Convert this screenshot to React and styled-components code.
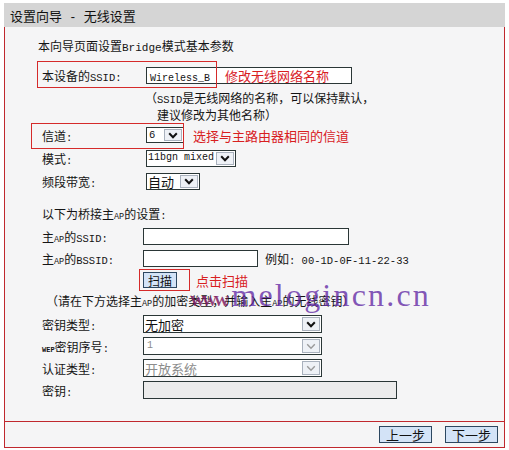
import React from 'react';
import styled, { createGlobalStyle } from 'styled-components';

const Global = createGlobalStyle`
  html, body { margin: 0; padding: 0; background: #ffffff; }
  body {
    font-family: "Noto Sans CJK SC", "Noto Sans", sans-serif;
    font-size: 12px;
    color: #141414;
  }
`;

const RED = '#c0282e';
const BORDER = '#2a3636';

const Frame = styled.div`
  margin: 3px 0 0 4px;
  width: 501px;
  display: flex;
  flex-direction: column;
`;

const TitleBar = styled.div`
  height: 24px;
  background: #d5d5d5;
  display: flex;
  align-items: center;
  padding-left: 6px;
  font-size: 13px;
  color: #111;
  white-space: pre;
`;

const Body = styled.div`
  border: 1px solid ${RED};
  border-top: none;
  background: #f5f5f6;
  display: flex;
  flex-direction: column;
`;

const Content = styled.div`
  height: 394px;
  box-sizing: border-box;
  padding: 9px 0 0 37px;
  display: flex;
  flex-direction: column;
`;

const Footer = styled.div`
  height: 25px;
  border-top: 1px solid ${RED};
  display: flex;
  justify-content: flex-end;
  align-items: center;
  gap: 13px;
  padding-right: 6px;
`;

const Row = styled.div`
  position: relative;
  display: flex;
  align-items: center;
  height: ${p => p.$h || 20}px;
  margin-top: ${p => p.$mt || 0}px;
  margin-left: ${p => p.$ml || 0}px;
  white-space: nowrap;
`;

const Text = styled.span`
  white-space: pre;
`;

const NoteLine = styled.div`
  height: 17px;
  line-height: 17px;
  padding-left: ${p => p.$pl}px;
  white-space: nowrap;
`;

const Notes = styled.div`
  margin-top: 4px;
  display: flex;
  flex-direction: column;
`;

const Label = styled.div`
  width: ${p => p.$w}px;
  flex: none;
  white-space: nowrap;
`;

const L = styled.span`
  font-family: "Liberation Mono", monospace;
  font-size: ${p => p.$size || 10.5}px;
  font-weight: ${p => (p.$bold ? 700 : 400)};
`;

const Field = styled.div`
  box-sizing: border-box;
  width: ${p => p.$w}px;
  height: ${p => p.$h || 17}px;
  border: 1px solid ${BORDER};
  background: ${p => (p.$disabled ? '#ececec' : '#ffffff')};
  display: flex;
  align-items: center;
  padding-left: 3px;
  flex: none;
`;

const FieldValue = styled.span`
  width: ${p => p.$w}px;
  flex: none;
`;

const Annot = styled.span`
  color: #d8201f;
  font-size: 13px;
  margin-left: ${p => p.$ml || 0}px;
`;

const Hint = styled.span`
  margin-left: ${p => p.$ml || 0}px;
`;

const Select = styled.div`
  box-sizing: border-box;
  width: ${p => p.$w}px;
  height: ${p => p.$h || 17}px;
  border: 1px solid ${BORDER};
  background: #fff;
  display: flex;
  align-items: stretch;
  flex: none;
  color: ${p => (p.$disabled ? '#8c8c8c' : '#111')};
`;

const SelectValue = styled.div`
  flex: 1;
  display: flex;
  align-items: center;
  padding-left: ${p => p.$pl ?? 1}px;
  line-height: 1;
  white-space: nowrap;
`;

const CjkValue = styled.span`
  font-size: 13px;
  line-height: 13px;
`;

const ArrowBox = styled.div`
  width: 16px;
  margin: 1px;
  border: 1px solid #a9b1bd;
  background: #eef1f6;
  display: flex;
  align-items: center;
  justify-content: center;
`;

const Mark = styled.div`
  position: absolute;
  left: ${p => p.$x}px;
  top: ${p => p.$y}px;
  width: ${p => p.$w}px;
  height: ${p => p.$h}px;
  box-sizing: border-box;
  border: 1px solid #d52a2a;
  pointer-events: none;
`;

const Button = styled.div`
  box-sizing: border-box;
  width: ${p => p.$w}px;
  height: ${p => p.$h}px;
  border: 1px solid #2c4760;
  background: #d3e3f7;
  display: flex;
  align-items: center;
  justify-content: center;
  font-size: ${p => p.$fs || 13}px;
  color: #111;
  flex: none;
`;

const Watermark = styled.div`
  position: absolute;
  left: 144px;
  top: -12px;
  font-family: "Liberation Serif", serif;
  font-size: 32px;
  line-height: 32px;
  letter-spacing: 2.2px;
  color: rgba(98, 42, 165, 0.78);
  pointer-events: none;
  white-space: nowrap;
`;

const WWW = styled.span`
  font-size: 15px;
  font-weight: 700;
  letter-spacing: -3px;
  color: rgba(130, 30, 100, 0.85);
  margin-right: 6px;
`;

const Chevron = ({ disabled }) => (
  <svg width="10" height="7" viewBox="0 0 10 7">
    <path
      d="M1.2 1.2 L5 5.2 L8.8 1.2"
      fill="none"
      stroke={disabled ? '#9a9a9a' : '#111'}
      strokeWidth={disabled ? 1.4 : 2}
    />
  </svg>
);

const Dropdown = ({ w, h, children, disabled, pl }) => (
  <Select $w={w} $h={h} $disabled={disabled}>
    <SelectValue $pl={pl}>{children}</SelectValue>
    <ArrowBox>
      <Chevron disabled={disabled} />
    </ArrowBox>
  </Select>
);

export default function App() {
  return (
    <>
      <Global />
      <Frame>
        <TitleBar>
          <Text>
            设置向导<L $size={12}> - </L>无线设置
          </Text>
        </TitleBar>
        <Body>
          <Content>
            <Row $h={18} $ml={-4}>
              <Text>
                本向导页面设置<L $size={11}>Bridge</L>模式基本参数
              </Text>
            </Row>

            <Row $mt={11}>
              <Mark $x={-5} $y={-4} $w={180} $h={27} />
              <Label $w={104}>
                本设备的<L>SSID:</L>
              </Label>
              <Field $w={206}>
                <FieldValue $w={75}>
                  <L $size={10}>Wireless_B</L>
                </FieldValue>
                <Annot>修改无线网络名称</Annot>
              </Field>
            </Row>

            <Notes>
              <NoteLine $pl={103}>
                （<L>SSID</L>是无线网络的名称，可以保持默认，
              </NoteLine>
              <NoteLine $pl={115}>建议修改为其他名称）</NoteLine>
            </Notes>

            <Row $mt={2}>
              <Mark $x={-11} $y={-2} $w={153} $h={26} />
              <Label $w={104}>
                信道<L>:</L>
              </Label>
              <Dropdown w={38} h={16} pl={2}>
                <L $size={10.5}>6</L>
              </Dropdown>
              <Annot $ml={9}>选择与主路由器相同的信道</Annot>
            </Row>

            <Row $mt={3}>
              <Label $w={104}>
                模式<L>:</L>
              </Label>
              <Dropdown w={90} pl={1}>
                <L $size={10}>11bgn mixed</L>
              </Dropdown>
            </Row>

            <Row $mt={3}>
              <Label $w={104}>
                频段带宽<L>:</L>
              </Label>
              <Dropdown w={54} pl={1}>
                <CjkValue>自动</CjkValue>
              </Dropdown>
            </Row>

            <Row $h={18} $mt={13}>
              <Text>
                以下为桥接主<L $size={8.5}>AP</L>的设置<L>:</L>
              </Text>
            </Row>

            <Row $mt={4}>
              <Label $w={101}>
                主<L $size={8.5}>AP</L>的<L>SSID:</L>
              </Label>
              <Field $w={206} />
            </Row>

            <Row $mt={2}>
              <Label $w={101}>
                主<L $size={8.5}>AP</L>的<L>BSSID:</L>
              </Label>
              <Field $w={115} />
              <Hint $ml={7}>
                例如<L>: 00-1D-0F-11-22-33</L>
              </Hint>
            </Row>

            <Row $mt={2}>
              <Mark $x={97} $y={-1} $w={51} $h={22} />
              <Label $w={101} />
              <Button $w={34} $h={16} $fs={12}>
                扫描
              </Button>
              <Annot $ml={19}>点击扫描</Annot>
            </Row>

            <Row $h={18} $mt={1} $ml={4}>
              <Text>
                （请在下方选择主<L $size={8.5}>AP</L>的加密类型，并输入主<L $size={8.5}>AP</L>的无线密钥）
              </Text>
              <Watermark>
                <WWW>WWW.</WWW>melogincn.cn
              </Watermark>
            </Row>

            <Row $mt={5}>
              <Label $w={101}>
                密钥类型<L>:</L>
              </Label>
              <Dropdown w={179} h={18} pl={1}>
                <CjkValue>无加密</CjkValue>
              </Dropdown>
            </Row>

            <Row $mt={2}>
              <Label $w={101}>
                <L $size={7} $bold>
                  WEP
                </L>
                密钥序号<L>:</L>
              </Label>
              <Dropdown w={179} h={18} pl={3} disabled>
                <L $size={10}>1</L>
              </Dropdown>
            </Row>

            <Row $mt={2}>
              <Label $w={101}>
                认证类型<L>:</L>
              </Label>
              <Dropdown w={179} h={18} pl={1} disabled>
                <CjkValue>开放系统</CjkValue>
              </Dropdown>
            </Row>

            <Row $mt={2}>
              <Label $w={101}>
                密钥<L>:</L>
              </Label>
              <Field $w={254} $h={18} $disabled />
            </Row>
          </Content>
          <Footer>
            <Button $w={53} $h={17}>
              上一步
            </Button>
            <Button $w={53} $h={17}>
              下一步
            </Button>
          </Footer>
        </Body>
      </Frame>
    </>
  );
}
